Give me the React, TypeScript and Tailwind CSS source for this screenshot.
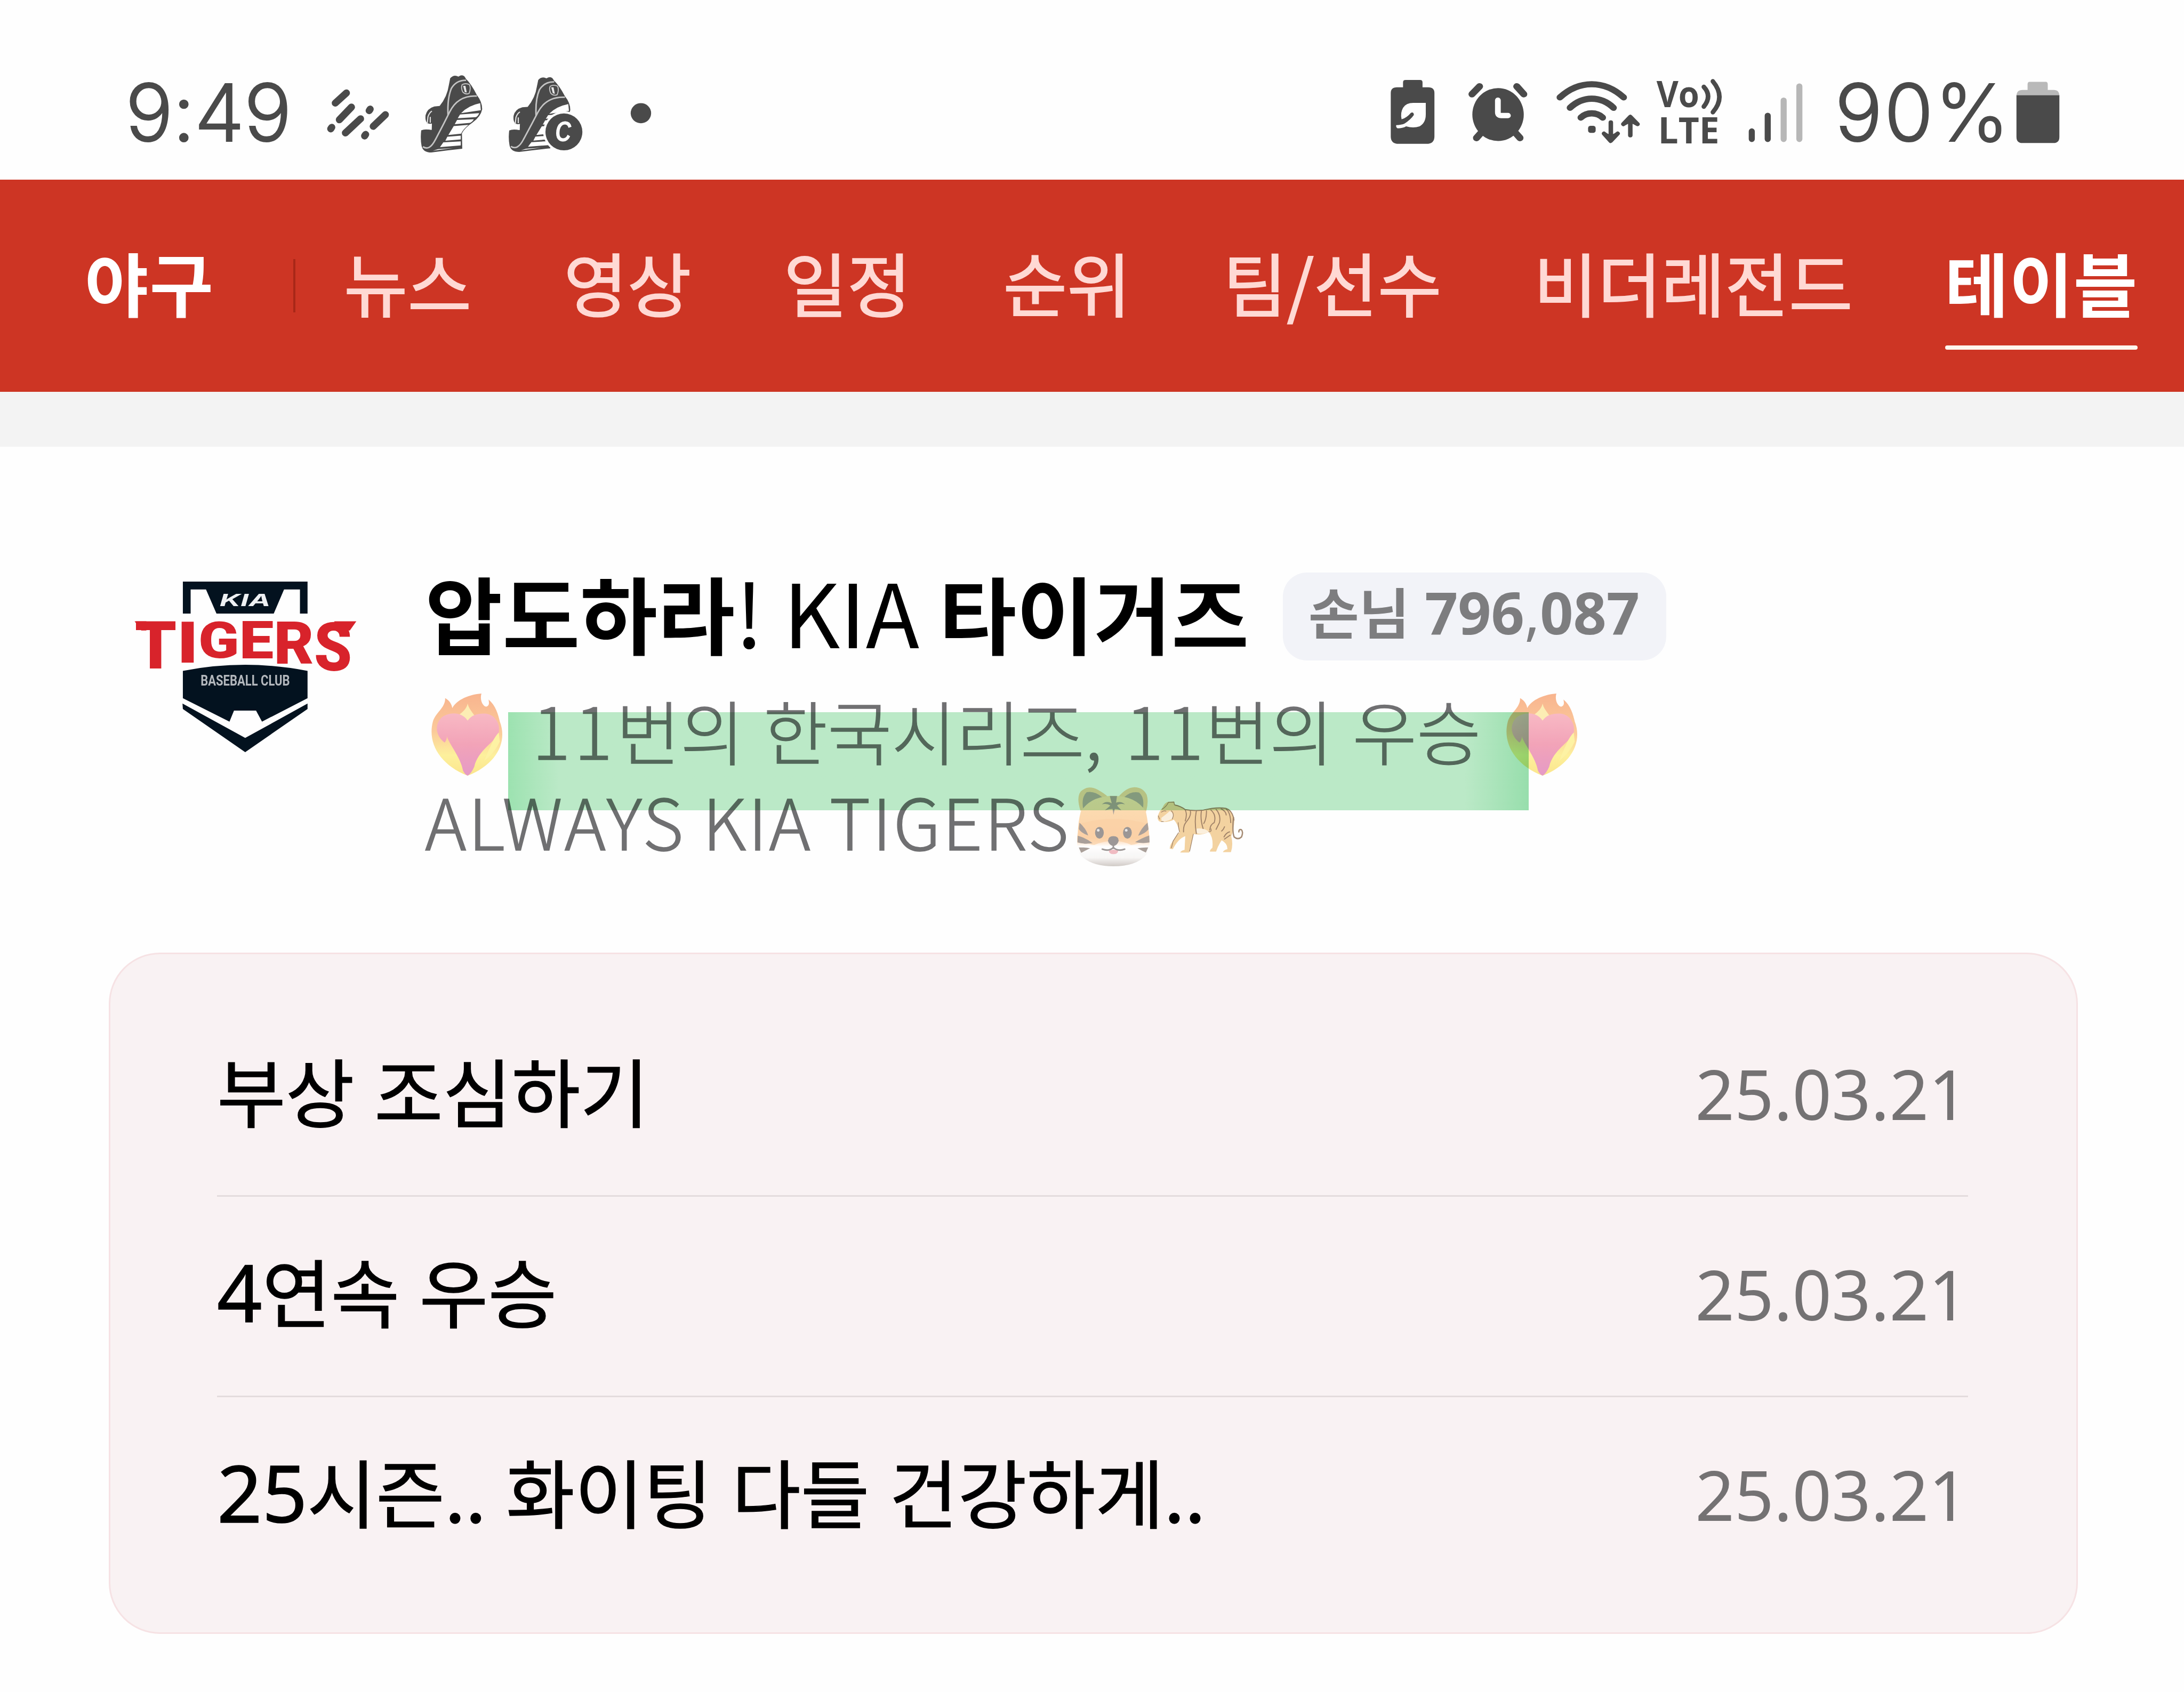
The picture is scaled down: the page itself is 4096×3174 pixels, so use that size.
import type { ReactNode } from 'react';
import clsx from 'clsx';

const tabs = [
  { label: '뉴스' },
  { label: '영상' },
  { label: '일정' },
  { label: '순위' },
  { label: '팀/선수' },
  { label: '비더레전드' },
  { label: '테이블', active: true },
];

const messages = [
  { id: 1, lead: '', text: '부상 조심하기', date: '25.03.21' },
  { id: 2, lead: '4', text: '연속 우승', date: '25.03.21' },
  { id: 3, lead: '25', text: '시즌.. 화이팅 다들 건강하게..', date: '25.03.21' },
];

interface StatusIconProps {
  viewBox: string;
  className: string;
  children: ReactNode;
}

function StatusIcon({ viewBox, className, children }: StatusIconProps) {
  return (
    <svg viewBox={viewBox} preserveAspectRatio="none" className={clsx('h-[337px] shrink-0', className)}>
      {children}
    </svg>
  );
}

function Shoe() {
  return (
    <g>
      <path
        d="M213 60Q235 35 262 50Q292 30 306 62Q340 95 372 160Q404 200 404 245Q395 290 345 325Q300 355 283 388L285 480Q190 490 100 502Q50 502 42 462Q34 420 40 370Q62 360 102 368L104 330Q60 340 66 280Q75 240 118 228L150 225Q195 170 205 100Z"
        fill="#4a4a4a"
      />
      <path d="M392 208L396 250L278 268Q320 222 392 208Z" fill="#fff" />
      <path d="M386 268Q380 285 366 292L258 298L272 276Z" fill="#fff" />
      <path d="M354 304Q345 320 330 326L240 334L254 308Z" fill="#fff" />
      <path d="M322 338Q290 365 278 390L202 398L234 345Z" fill="#fff" />
      <path d="M276 402V424L184 432L196 408Z" fill="#fff" />
      <path d="M276 436V460L152 470L172 442Z" fill="#fff" />
      <path d="M230 476L110 492L140 482Z" fill="#fff" />
      <path d="M60 335L62 362L102 366V335Z" fill="#fff" />
      <path d="M76 332L80 290Q90 262 104 256M94 325V290" stroke="#ddd" strokeWidth="7" fill="none" />
      <path d="M50 468Q90 495 125 425Q170 340 210 260Q260 160 372 166" stroke="#c4c4c4" strokeWidth="9" fill="none" />
      <path d="M200 280Q195 180 220 120Q250 70 308 72" stroke="#c4c4c4" strokeWidth="9" fill="none" />
      <path d="M284 98Q305 86 328 98Q338 120 326 150Q305 160 288 142Q276 118 284 98Z" fill="none" stroke="#c4c4c4" strokeWidth="6" />
      <path d="M290 105H304L312 145L300 142Z" fill="#e8e8e8" />
    </g>
  );
}

function StatusBar() {
  return (
    <header className="flex h-[337px] bg-[#fefefe] pl-[235px] pr-[229px] text-[#4a4a4a]">
      <span className="h-[337px] w-[372px] shrink-0 whitespace-nowrap font-['Inter'] text-[149px] leading-[423px] font-light tracking-[-1px] [-webkit-text-stroke:2px_#4a4a4a]">
        9:49
      </span>
      <StatusIcon viewBox="640 0 136 355.5" className="w-[129px]">
        <g stroke="currentColor" strokeWidth="14" strokeLinecap="round">
          <path d="M685 184L663 204M695 212L671 237M713 235L683 263M762 227L738 250" />
          <path d="M656 252L654 255M732 216L730 219M723 266L721 269" />
        </g>
      </StatusIcon>
      <StatusIcon viewBox="828 0 130 355.5" className="ml-[49px] w-[123px]">
        <g transform="translate(820 135) scale(0.332)">
          <Shoe />
        </g>
      </StatusIcon>
      <StatusIcon viewBox="1002 0 154 355.5" className="ml-[42px] w-[146px]">
        <g transform="translate(994 139) scale(0.332 0.322)">
          <Shoe />
        </g>
        <circle cx="1115.500" cy="261" r="41" fill="#fefefe" />
        <circle cx="1115.500" cy="261" r="36.500" fill="currentColor" />
        <text x="1098" y="280" fontFamily="Liberation Sans" fontWeight="700" fontStyle="italic" fontSize="56" textLength="32" lengthAdjust="spacingAndGlyphs" fill="#fff">
          C
        </text>
      </StatusIcon>
      <StatusIcon viewBox="1244 0 48 355.5" className="ml-[83px] w-[46px]">
        <circle cx="1268" cy="224" r="20" fill="currentColor" />
      </StatusIcon>

      <StatusIcon viewBox="2744 0 96 355.5" className="ml-auto w-[91px]">
        <g transform="translate(2720 135) scale(0.357 0.3333)">
          <path d="M162 70H242Q256 70 256 84V113H288Q322 113 322 147V405Q322 449 278 449H124Q80 449 80 405V147Q80 113 114 113H148V84Q148 70 162 70Z" fill="currentColor" />
          <path d="M274 206V275Q274 325 240 345Q205 358 165 345Q145 357 118 357Q108 352 110 338Q140 338 158 328Q190 305 208 278Q208 258 192 264Q168 295 140 303Q132 265 148 235Q165 206 205 206Z" fill="#fff" />
        </g>
      </StatusIcon>
      <StatusIcon viewBox="2899 0 126 355.5" className="ml-[55px] w-[119px]">
        <g transform="translate(2720 135) scale(0.357 0.3333)" strokeLinecap="round" strokeLinejoin="round" fill="none">
          <ellipse cx="678" cy="275" rx="143" ry="157" fill="currentColor" />
          <path d="M575 108L533 154M782 108L821 154" stroke="currentColor" strokeWidth="39" />
          <path d="M582 385L558 414M776 385L800 414" stroke="currentColor" strokeWidth="39" />
          <path d="M677 190V262Q677 281 696 281H733" stroke="#fff" strokeWidth="32" />
        </g>
      </StatusIcon>
      <StatusIcon viewBox="3073 0 174 355.5" className="ml-[46px] w-[165px]">
        <g transform="translate(2720 135) scale(0.357 0.3333)" strokeLinecap="round" strokeLinejoin="round" stroke="currentColor" fill="none">
          <path d="M1020 173Q1100 95 1196 95Q1292 95 1373 173" strokeWidth="37" />
          <path d="M1076 235Q1130 181 1196 181Q1264 181 1317 235" strokeWidth="37" />
          <path d="M1136 293Q1160 268 1196 268Q1232 268 1257 293" strokeWidth="37" />
          <path d="M1302 322V420M1410 398V300" strokeWidth="25" />
          <path d="M1264 388L1301 432L1340 388Q1320 405 1302 406Q1284 405 1264 388ZM1371 332L1410 288L1450 332Q1430 318 1410 316Q1390 318 1371 332Z" fill="currentColor" strokeWidth="24" />
          <rect x="1190" y="356" width="14" height="14" strokeWidth="28" />
        </g>
      </StatusIcon>
      <StatusIcon viewBox="3270 0 142 355.5" className="ml-[22px] w-[134px]">
        <g fill="currentColor" fontFamily="Open Sans" fontWeight="700" fontSize="71">
          <text x="3275" y="212" textLength="85" lengthAdjust="spacingAndGlyphs">Vo</text>
          <text x="3278" y="284" textLength="122" lengthAdjust="spacingAndGlyphs">LTE</text>
        </g>
        <path d="M3369 172Q3386 190 3369 211M3387 161Q3413 192 3387 222" fill="none" stroke="currentColor" strokeWidth="9" strokeLinecap="round" />
      </StatusIcon>
      <StatusIcon viewBox="3452 0 118 355.5" className="ml-[38px] w-[112px]">
        <g strokeWidth="12" strokeLinecap="round" stroke="#4a4a4a">
          <path d="M3464 260V275M3495.500 229V275" />
          <path d="M3527 199V275M3558 171V275" stroke="#b7b7b7" />
        </g>
      </StatusIcon>
      <span className="ml-[55px] h-[337px] w-[337px] shrink-0 whitespace-nowrap font-['Inter'] text-[149px] leading-[423px] font-light tracking-[3px] [-webkit-text-stroke:2px_#4a4a4a]">
        90%
      </span>
      <StatusIcon viewBox="3984 0 94 355.5" className="w-[89px]">
        <path d="M4014 162H4046Q4050 162 4050 167V178H4062Q4073 178 4073 190H3988Q3988 178 4000 178H4010V167Q4010 162 4014 162Z" fill="#b9b9b9" />
        <path d="M3988 188.500H4073V271Q4073 283 4061 283H4000Q3988 283 3988 271Z" fill="currentColor" />
      </StatusIcon>
    </header>
  );
}

function NavBar() {
  return (
    <nav className="flex h-[398px] bg-[#cd3524] pl-[159px] text-[130px] leading-[381px]">
      <span className="w-[240px] shrink-0 whitespace-nowrap font-bold tracking-[2px] text-white">야구</span>
      <i className="mt-[149px] ml-[151px] h-[100px] w-[4px] shrink-0 bg-[#a92718]" />
      <ul className="ml-[91px] flex gap-[173px]">
        {tabs.map((tab) => (
          <li
            key={tab.label}
            className={clsx(
              'relative shrink-0 whitespace-nowrap',
              tab.active ? 'font-bold tracking-[1px] text-white' : 'text-[#ffd9d4] [-webkit-text-stroke:2px_#ffd9d4]',
            )}
          >
            {tab.label}
            {tab.active && <span className="absolute top-[311px] left-0 h-[8px] w-full rounded-full bg-[#fff6ee]" />}
          </li>
        ))}
      </ul>
    </nav>
  );
}

function TeamLogo() {
  return (
    <svg viewBox="160 140 1260 1040" preserveAspectRatio="none" className="mt-[22px] ml-[244px] h-[329px] w-[427px] shrink-0 overflow-visible">
      <g fill="#03121f">
        <path d="M452 153H1142V342H1100V199H1012L955 342H638L580 199H495V342H452Z" />
        <path d="M452 682Q797 610 1142 682V844L890 983L857 918H735L710 983L452 844Z" />
        <path d="M450 876L797 1080L1142 876V908L797 1164L452 908Z" />
      </g>
      <text x="655" y="298" fontFamily="Inter" fontWeight="700" fontStyle="italic" fontSize="98" textLength="282" lengthAdjust="spacingAndGlyphs" fill="#eef1f4">
        KIA
      </text>
      <g fill="#d8232b" fontFamily="Roboto" fontWeight="900">
        <path d="M185 388H250V443H222Z" />
        <path d="M1290 388H1412L1376 443H1300Z" />
        <text x="186" y="668" fontSize="394" textLength="232" lengthAdjust="spacingAndGlyphs">T</text>
        <text x="420" y="632" fontSize="343" textLength="118" lengthAdjust="spacingAndGlyphs">I</text>
        <text x="538" y="605" fontSize="298" textLength="226" lengthAdjust="spacingAndGlyphs">G</text>
        <text x="764" y="608" fontSize="309" textLength="190" lengthAdjust="spacingAndGlyphs">E</text>
        <text x="955" y="640" fontSize="354" textLength="222" lengthAdjust="spacingAndGlyphs">R</text>
        <text x="1178" y="680" fontSize="398" textLength="210" lengthAdjust="spacingAndGlyphs">S</text>
      </g>
      <text x="550" y="768" fontFamily="Roboto" fontWeight="700" fontSize="86" textLength="494" lengthAdjust="spacingAndGlyphs" fill="#b4b8bd">
        BASEBALL CLUB
      </text>
    </svg>
  );
}

function FireHeart({ id, className }: { id: string; className: string }) {
  return (
    <svg viewBox="0 0 143 165" preserveAspectRatio="none" className={clsx('h-[155px] w-[137px] shrink-0', className)}>
      <defs>
        <linearGradient id={`${id}-flame`} x1="0" y1="0" x2="0" y2="1">
          <stop offset="0" stopColor="#f8b48e" />
          <stop offset="0.45" stopColor="#fbc99a" />
          <stop offset="0.75" stopColor="#fdf09c" />
          <stop offset="1" stopColor="#fbe58c" />
        </linearGradient>
        <linearGradient id={`${id}-heart`} x1="0" y1="0" x2="0" y2="1">
          <stop offset="0" stopColor="#f8b9c4" />
          <stop offset="0.5" stopColor="#f2a3b8" />
          <stop offset="1" stopColor="#e59ac6" />
        </linearGradient>
      </defs>
      <path
        d="M98 0C94 14 102 27 108 26C114 24 113 18 112 12C126 24 131 42 134 56C150 98 126 142 71 164C16 142 -8 98 3 56C8 38 28 28 27 9C36 14 40 22 41 29C50 12 74 2 98 0Z"
        fill={`url(#${id}-flame)`}
      />
      <path d="M71 20C74 34 86 42 88 52L71 58L46 50C52 42 68 36 71 20Z" fill="#fcedb4" />
      <path d="M71 54C60 36 34 36 20 48C6 62 8 84 26 98C32 90 30 84 30 84C34 100 58 128 62 154Q66 162 71 164Q78 160 84 146C92 112 124 98 132 78C136 56 120 40 104 40C88 40 78 44 71 54Z" fill={`url(#${id}-heart)`} />
      <path d="M132 78C122 88 116 104 104 134Q124 118 134 96Z" fill="#fdf2a4" />
    </svg>
  );
}

function TigerFace() {
  return (
    <svg viewBox="85 78 438 474" className="mt-[23px] h-[149px] w-[138px] shrink-0 opacity-85">
      <defs>
        <linearGradient id="face" x1="0" y1="0" x2="0" y2="1">
          <stop offset="0" stopColor="#fcd9a6" />
          <stop offset="0.6" stopColor="#fbcb9c" />
          <stop offset="0.72" stopColor="#fff" />
          <stop offset="0.88" stopColor="#f6f4f3" />
          <stop offset="1" stopColor="#c9c2bd" />
        </linearGradient>
      </defs>
      <path d="M108 220Q82 140 110 105Q155 65 210 95Q255 120 270 137H335Q380 82 430 80Q480 80 503 125Q516 165 500 225Z" fill="#f6cd98" />
      <path d="M124 210Q112 140 145 110Q190 100 238 140Q170 160 124 210ZM368 140Q410 102 458 112Q492 140 480 210Q430 160 368 140Z" fill="#a59a90" />
      <path d="M110 225Q170 132 304 132Q440 132 498 225Q510 280 516 350Q530 440 500 485Q440 552 304 552Q170 552 108 485Q78 440 92 350Q95 280 110 225Z" fill="url(#face)" />
      <path d="M95 350Q130 420 190 425Q250 400 304 400Q360 400 410 425Q480 420 516 350L510 300Q304 240 100 300Z" fill="#fbc996" opacity="0.7" />
      <g fill="#9b8f88">
        <path d="M283 133H326L320 175L305 245L294 175Z" />
        <path d="M236 182Q265 155 304 182Q340 155 374 182Q340 175 326 190L352 218Q304 200 254 218L286 190Q265 175 236 182Z" />
        <path d="M102 292Q140 325 154 368Q115 355 98 330ZM92 370Q145 385 180 414Q130 422 90 410ZM98 440Q135 438 165 445Q135 460 112 472Z" />
        <path d="M508 292Q470 325 452 370Q492 358 514 332ZM518 368Q470 385 434 408Q480 418 520 410ZM512 440Q480 438 448 445Q475 460 498 470Z" />
      </g>
      <ellipse cx="221" cy="352" rx="26" ry="35" fill="#8a8583" />
      <ellipse cx="388" cy="352" rx="26" ry="35" fill="#8a8583" />
      <circle cx="214" cy="337" r="8" fill="#e6e4e3" />
      <circle cx="381" cy="337" r="8" fill="#e6e4e3" />
      <path d="M276 458Q304 448 334 458Q330 480 305 480Q280 480 276 458Z" fill="#eeb0b8" />
      <path d="M272 400Q274 372 304 372Q336 372 336 400Q330 425 304 432Q278 425 272 400Z" fill="#8c8684" />
      <path d="M238 450Q280 465 304 440Q330 465 372 450M304 425V445" fill="none" stroke="#8c8684" strokeWidth="9" strokeLinecap="round" />
    </svg>
  );
}

function Tiger() {
  return (
    <svg viewBox="565 160 512 310" className="mt-[49px] ml-[13px] h-[98px] w-[162px] shrink-0">
      <path
        d="M568 262Q572 228 595 205Q610 170 632 166L665 165L672 185Q705 192 732 213Q780 222 840 216Q920 196 975 206Q1015 220 1024 275Q1020 330 1005 372Q1018 420 1003 465H955Q962 452 982 448Q984 415 948 395Q925 430 915 462H878Q880 448 893 440Q900 380 872 345Q830 368 780 358Q768 410 755 468H702Q708 455 728 452L732 370Q690 385 658 448L640 445Q640 425 655 405Q680 370 698 348Q690 300 664 272Q640 288 590 286Q570 285 568 262Z"
        fill="#f3d2a0"
      />
      <path d="M590 262Q620 240 640 222Q664 230 662 262Q630 285 592 284Z" fill="#fbf0df" />
      <path d="M795 350Q830 366 872 345Q850 320 800 325Z" fill="#fbefdc" />
      <g fill="none" stroke="#a08268" strokeWidth="6" strokeLinecap="round">
        <path d="M1018 260Q1010 345 1022 375Q1045 395 1066 375Q1078 345 1065 332Q1050 328 1050 345" stroke="#a58b74" strokeWidth="8" />
        <path d="M672 186Q705 192 732 213Q780 222 840 216Q920 196 975 206Q1012 218 1021 275" />
        <path d="M732 215Q745 240 732 280M762 220Q770 250 735 290Q720 310 722 345M798 222Q785 280 798 355M828 220Q820 270 838 325M858 220Q858 270 842 295M884 215Q918 245 904 290Q880 300 878 335M915 212Q945 245 935 290L915 330M945 208Q975 225 975 245M965 315Q960 330 948 340M975 210Q1000 230 1002 290M995 345Q975 350 962 375M998 365L965 388" />
        <path d="M595 210Q620 195 632 170L665 168L668 185M590 228Q605 218 618 222M650 220Q670 240 655 268M572 250L580 270M590 284L602 284M692 350L660 400L650 440M780 358L758 460M872 345Q892 345 884 325M690 290Q690 310 698 345" strokeWidth="4" />
      </g>
    </svg>
  );
}

function TeamHeader() {
  return (
    <section className="flex pt-[228px]">
      <TeamLogo />
      <div className="ml-[126px]">
        <div className="flex h-[166px] items-start">
          <h1 className="h-[166px] w-[1609px] shrink-0 text-[158px] leading-[166px] font-bold whitespace-pre text-black">
            압도하라
            <span className="text-[165px] leading-[0] font-normal">! KIA </span>
            타이거즈
          </h1>
          <p className="mt-[9px] h-[165px] w-[719px] shrink-0 rounded-[45px] bg-[#f2f3f8] pl-[48px] text-[103px] leading-[143px] font-bold whitespace-pre text-[#7d7d7f]">
            손님
            <span className="font-['Noto_Sans'] text-[109px] leading-[0]">
              {' '}796<span className="font-normal">,</span>087
            </span>
          </p>
        </div>
        <div className="relative mt-[52px] text-[131px] font-light text-[#707072] [-webkit-text-stroke:1.5px_#707072]">
          <div className="flex h-[170px] leading-[170px]">
            <FireHeart id="left" className="mt-[18px] ml-[12px]" />
            <p className="ml-[52px] w-[1827px] shrink-0 whitespace-pre [word-spacing:6px]">
              <span className="text-[134px] leading-[0] tracking-[7px]">11</span>번의 한국시리즈
              <span className="text-[134px] leading-[0] tracking-[3.5px]">, 11</span>번의 우승
            </p>
            <FireHeart id="right" className="mt-[18px]" />
          </div>
          <div className="flex h-[170px] leading-[170px]">
            <p className="w-[1222px] shrink-0 text-[132px] tracking-[3.3px] whitespace-pre">ALWAYS KIA TIGERS</p>
            <TigerFace />
            <Tiger />
          </div>
          <div className="absolute top-[53px] left-[156px] h-[184px] w-[1914px] bg-linear-to-r from-[#9de3b1] via-[#bceac8] via-5% to-[#bceac8] mix-blend-multiply">
            <div className="ml-auto h-full w-[120px] bg-linear-to-r from-[#bceac8] to-[#98dfad]" />
          </div>
        </div>
      </div>
    </section>
  );
}

function MessageList() {
  return (
    <ul className="mt-[164px] ml-[204px] h-[1278px] w-[3693px] rounded-[96px] border-[3px] border-[#f6e2e4] bg-[#f9f2f3] pt-[79px] pr-[203px] pl-[200px]">
      {messages.map((message) => (
        <li
          key={message.id}
          className="flex h-[376px] items-start justify-between border-b-[3px] border-[#e4dcdd] leading-[349px] whitespace-pre last:border-b-0"
        >
          <span className="text-[140px] text-black [-webkit-text-stroke:1.5px_black] [word-spacing:6px]">
            {message.lead && <span className="font-['Noto_Sans'] text-[148px] leading-[0]">{message.lead}</span>}
            {message.text}
          </span>
          <time className="font-['Noto_Sans'] text-[129px] leading-[364px] text-[#747273]">{message.date}</time>
        </li>
      ))}
    </ul>
  );
}

export default function App() {
  return (
    <div className="h-[3174px] w-[4096px] overflow-hidden bg-[#fefefe] font-['Noto_Sans_CJK_KR',sans-serif]">
      <StatusBar />
      <NavBar />
      <div className="h-[103px] bg-[#f3f3f3]" />
      <div className="-mt-px">
        <TeamHeader />
      </div>
      <MessageList />
    </div>
  );
}
